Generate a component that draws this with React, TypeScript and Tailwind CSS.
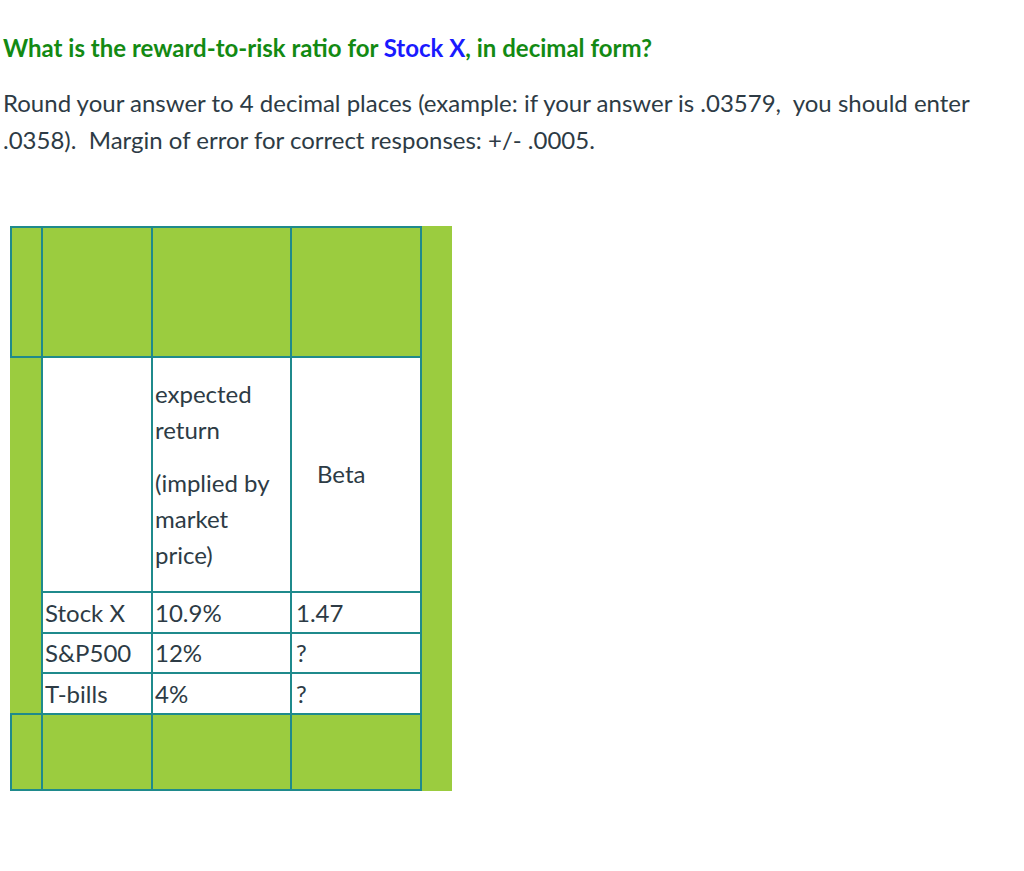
import React from 'react';

interface DataRow {
  name: string;
  expected: string;
  beta: string;
}

const rows: DataRow[] = [
  { name: 'Stock X', expected: '10.9%', beta: '1.47' },
  { name: 'S&P500', expected: '12%', beta: '?' },
  { name: 'T-bills', expected: '4%', beta: '?' },
];

const line = 'border-[#1f8a8c]';

const App: React.FC = () => {
  return (
    <div
      className="min-h-[871px] bg-white text-[#2d3b45] text-[24px] leading-[36px]"
      style={{ fontFamily: 'Lato, "Open Sans", sans-serif' }}
    >
      <div className="pl-[3px] pt-[30px]">
        <p className="font-bold text-[#138a13]">
          What is the reward-to-risk ratio for <span className="text-[#1a1aff]">Stock X</span>, in decimal form?
        </p>
        <p className="mt-[18px] w-[1000px] leading-[37px]">
          Round your answer to 4 decimal places (example: if your answer is .03579,{'\u00a0'} you should enter .0358).{'\u00a0'} Margin of error for correct responses: +/- .0005.
        </p>
      </div>

      {/* table with the green backdrop */}
      <div className="ml-[10px] mt-[68px] flex w-[442px] bg-[#9bcc3f]">
        <div className="flex w-[412px] flex-col">
          {/* header row */}
          <div className={`flex h-[130px] border-t-2 ${line}`}>
            <div className={`w-[31px] border-l-2 ${line}`} />
            <div className={`w-[110px] border-l-2 ${line}`} />
            <div className={`w-[139px] border-l-2 ${line}`} />
            <div className={`w-[132px] border-x-2 ${line}`} />
          </div>

          {/* column titles */}
          <div className={`flex h-[235px] border-t-2 ${line}`}>
            <div className="w-[31px]" />
            <div className={`w-[110px] border-l-2 bg-white ${line}`} />
            <div className={`flex w-[139px] flex-col justify-center border-l-2 bg-white pl-[2px] ${line}`}>
              <p>expected<br />return</p>
              <p className="mt-[17px]">(implied by<br />market<br />price)</p>
            </div>
            <div className={`flex w-[132px] items-center border-x-2 bg-white pb-[2px] pl-[25px] ${line}`}>
              Beta
            </div>
          </div>

          {rows.map((r, i) => (
            <div key={r.name} className={`flex ${i === 1 ? 'h-[40px]' : 'h-[41px]'}`}>
              <div className="w-[31px]" />
              <div className={`flex w-[110px] items-center border-l-2 border-t-2 bg-white pl-[2px] ${line}`}>
                {r.name}
              </div>
              <div className={`flex w-[139px] items-center border-l-2 border-t-2 bg-white pl-[2px] ${line}`}>
                {r.expected}
              </div>
              <div className={`flex w-[132px] items-center border-x-2 border-t-2 bg-white pl-[4px] ${line}`}>
                {r.beta}
              </div>
            </div>
          ))}

          {/* bottom row */}
          <div className={`flex h-[78px] border-y-2 ${line}`}>
            <div className={`w-[31px] border-l-2 ${line}`} />
            <div className={`w-[110px] border-l-2 ${line}`} />
            <div className={`w-[139px] border-l-2 ${line}`} />
            <div className={`w-[132px] border-x-2 ${line}`} />
          </div>
        </div>
        <div className="flex-1" />
      </div>
    </div>
  );
};

export default App;
